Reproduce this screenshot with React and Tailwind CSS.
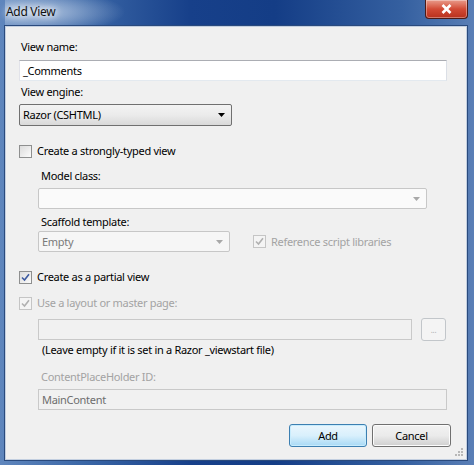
const FONT = "font-['Noto_Sans','Liberation_Sans',sans-serif]";

const Check = ({ checked, disabled }) => (
  <span
    className={`flex h-[13px] w-[13px] shrink-0 items-center justify-center border ${
      disabled
        ? "border-[#c5c5c5] bg-[#f4f4f4]"
        : "border-[#8e8f8f] bg-gradient-to-br from-[#dcdcdc] to-[#fbfbfb]"
    }`}
  >
    {checked && (
      <svg width="9" height="9" viewBox="0 0 9 9">
        <path
          d="M1 4.5 L3.5 7 L8 1.2"
          fill="none"
          stroke={disabled ? "#b0b0b0" : "#3d5aa0"}
          strokeWidth="1.6"
        />
      </svg>
    )}
  </span>
);

const Arrow = ({ color }) => (
  <svg width="7" height="4" viewBox="0 0 7 4">
    <path d="M0 0 H7 L3.5 4 Z" fill={color} />
  </svg>
);

const TextBox = ({ value, disabled, className }) => (
  <div
    className={`flex h-[21px] items-center border px-[3px] ${className} ${
      disabled
        ? "border-[#c9c9c9] bg-[#f1f1f1] text-[#6d6d6d]"
        : "border-[#abadb3] border-l-[#e2e3ea] border-r-[#dbdfe6] border-b-[#e3e9ef] bg-white text-black"
    }`}
  >
    {value}
  </div>
);

const Combo = ({ value, disabled, className, height }) => (
  <div
    className={`flex items-center justify-between rounded-[2px] border pl-[3px] pr-[6px] ${height} ${className} ${
      disabled
        ? "border-[#c7c7c7] bg-[#f6f6f6] text-[#7a7a7a]"
        : "border-[#707070] bg-gradient-to-b from-[#f3f3f3] via-[#ebebeb] to-[#d9d9d9] text-black"
    }`}
  >
    <span>{value}</span>
    <Arrow color={disabled ? "#a8a8a8" : "#000"} />
  </div>
);

export default function App() {
  return (
    <div
      className={`flex h-[465px] w-[474px] flex-col bg-[linear-gradient(90deg,#5f86bd_0%,#3a66a6_18%,#17408a_40%,#143d86_58%,#3560a0_85%,#5a7fb6_100%)] pb-[5px] pl-[5px] pr-[7px] text-[11px] tracking-[-0.3px] ${FONT}`}
    >
      <div className="flex h-[26px] shrink-0 items-start justify-between bg-[radial-gradient(ellipse_90px_22px_at_30px_12px,rgba(200,215,235,0.85),rgba(200,215,235,0)_100%)]">
        <span className="ml-[1px] mt-[4px] text-[12px] leading-[16px] text-[#111] [text-shadow:0_0_6px_#fff,0_0_10px_#fff]">
          Add View
        </span>
        <div className="-mr-[1px] flex h-[19px] w-[43px] items-center justify-center rounded-b-[4px] border border-t-0 border-[#4c1a16] bg-gradient-to-b from-[#e89a8a] via-[#d24a35] to-[#b8301c] shadow-[inset_0_0_0_1px_rgba(255,255,255,0.35)]">
          <svg width="11" height="10" viewBox="0 0 11 10">
            <path d="M1.5 1 L9.5 9 M9.5 1 L1.5 9" stroke="#fff" strokeWidth="2.6" />
          </svg>
        </div>
      </div>

      <div className="relative flex flex-1 flex-col border border-[#c3cfe0] bg-[#f0f0f0] pl-[13px] pr-[19px] pt-[12px] leading-[16px] shadow-[0_0_0_1px_#2a4a7d]">
        <div className="ml-[2px] h-4 text-black">View name:</div>
        <TextBox value="_Comments" className="mt-[5px]" />
        <div className="ml-[2px] mt-[3px] h-4 text-black">View engine:</div>
        <Combo value="Razor (CSHTML)" className="mt-[4px] w-[213px]" height="h-[22px]" />

        <div className="mt-[17px] flex h-4 items-center gap-[5px]">
          <Check />
          <span>Create a strongly-typed view</span>
        </div>

        <div className="pl-[19px]">
          <div className="ml-[3px] mt-[9px] h-4">Model class:</div>
          <Combo value="" disabled className="mt-[4px] w-[389px] bg-[#fafafa]" height="h-[21px]" />
          <div className="ml-[3px] mt-[5px] h-4">Scaffold template:</div>
          <div className="mt-[1px] flex items-center">
            <Combo value="Empty" disabled className="w-[192px]" height="h-[21px]" />
            <div className="ml-[23px] flex items-center gap-[5px] text-[#a3a3a3]">
              <Check checked disabled />
              <span>Reference script libraries</span>
            </div>
          </div>
        </div>

        <div className="mt-[17px] flex h-4 items-center gap-[5px]">
          <Check checked />
          <span>Create as a partial view</span>
        </div>
        <div className="mt-[10px] flex h-4 items-center gap-[5px] text-[#a3a3a3]">
          <Check checked disabled />
          <span>Use a layout or master page:</span>
        </div>

        <div className="pl-[19px]">
          <div className="mt-[7px] flex h-[23px] items-center">
            <TextBox value="" disabled className="w-[374px]" />
            <div className="ml-[9px] flex h-[23px] w-[25px] items-end justify-center rounded-[3px] border border-[#c2c6ca] bg-[#f4f4f4] pb-[6px] text-[8px] leading-[8px] text-[#b0b0b0]">
              ...
            </div>
          </div>
          <div className="ml-[4px] mt-[1px] h-4">
            (Leave empty if it is set in a Razor _viewstart file)
          </div>
          <div className="ml-[3px] mt-[11px] h-4 text-[#a3a3a3]">ContentPlaceHolder ID:</div>
          <TextBox value="MainContent" disabled className="mt-[4px]" />
        </div>

        <div className="-mr-[4px] mt-[14px] flex justify-end gap-[5px]">
          <div className="flex h-[23px] w-[78px] items-center justify-center rounded-[3px] border border-[#3c7fb1] bg-gradient-to-b from-[#eaf6fd] via-[#d9f0fc] to-[#a7d9f5] shadow-[inset_0_0_0_1px_#c8ecfd]">
            Add
          </div>
          <div className="flex h-[23px] w-[79px] items-center justify-center rounded-[3px] border border-[#707070] bg-gradient-to-b from-[#f2f2f2] via-[#ebebeb] to-[#cfcfcf] shadow-[inset_0_0_0_1px_#fcfcfc]">
            Cancel
          </div>
        </div>

        <svg className="absolute bottom-[2px] right-[2px]" width="10" height="10" viewBox="0 0 10 10">
          <g fill="#b8b8b8">
            <rect x="7" y="1" width="2" height="2" />
            <rect x="4" y="4" width="2" height="2" />
            <rect x="7" y="4" width="2" height="2" />
            <rect x="1" y="7" width="2" height="2" />
            <rect x="4" y="7" width="2" height="2" />
            <rect x="7" y="7" width="2" height="2" />
          </g>
        </svg>
      </div>
    </div>
  );
}
